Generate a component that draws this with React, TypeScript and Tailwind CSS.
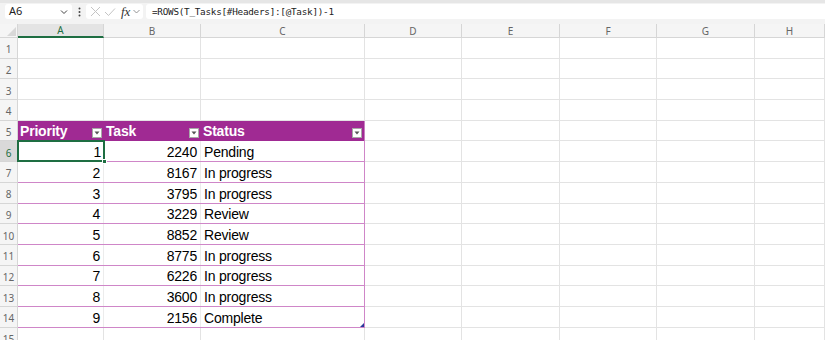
import React from "react"

const cols = [
  { key: "A", w: "w-[86px]" },
  { key: "B", w: "w-[97px]" },
  { key: "C", w: "w-[164px]" },
  { key: "D", w: "w-[97px]" },
  { key: "E", w: "w-[98px]" },
  { key: "F", w: "w-[97px]" },
  { key: "G", w: "w-[98px]" },
  { key: "H", w: "flex-1" },
]

const data: [number, number, string][] = [
  [1, 2240, "Pending"],
  [2, 8167, "In progress"],
  [3, 3795, "In progress"],
  [4, 3229, "Review"],
  [5, 8852, "Review"],
  [6, 8775, "In progress"],
  [7, 6226, "In progress"],
  [8, 3600, "In progress"],
  [9, 2156, "Complete"],
]

const cellFont = { fontFamily: '"Liberation Sans", Arial, sans-serif' }
const uiFont = { fontFamily: '"Segoe UI", "Noto Sans", "Open Sans", sans-serif' }

function FilterBtn() {
  return (
    <span className="absolute right-[2px] bottom-[3px] w-[10px] h-[10px] bg-white border border-[#a8a8a8] flex items-center justify-center">
      <svg width="6" height="4" viewBox="0 0 6 4">
        <path d="M0.5 0.5 L5.5 0.5 L3 3.5 Z" fill="#555" />
      </svg>
    </span>
  )
}

function RowHead({ n, active }: { n: number; active?: boolean }) {
  return (
    <div
      className={
        "w-[18px] shrink-0 flex items-center justify-center pt-[3px] text-[10px] leading-none border-r border-b border-[#d6d6d6] " +
        (active ? "bg-[#d9d9d9] text-[#1e6e42]" : "bg-[#f5f5f5] text-[#666]")
      }
      style={uiFont}
    >
      {n}
    </div>
  )
}

function EmptyRow({ n }: { n: number }) {
  return (
    <div className="flex h-[20.7px]">
      <RowHead n={n} />
      {cols.map((c) => (
        <div key={c.key} className={c.w + " shrink-0 border-r border-b border-[#e3e3e3]"} />
      ))}
    </div>
  )
}

export default function App() {
  return (
    <div className="w-[825px] h-[340px] overflow-hidden bg-white relative select-none">
      {/* Formula bar */}
      <div className="h-[24px] bg-[#f3f3f3] border-t-[3px] border-[#e6e6e6] flex items-start pt-[1px] pl-[5px]" style={uiFont}>
        <div className="w-[67px] h-[15px] bg-white rounded-[3px] flex items-center justify-between pl-[4px] pr-[4px] text-[11px] text-[#222]">
          <span>A6</span>
          <svg width="8" height="6" viewBox="0 0 8 6">
            <path d="M1 1.5 L4 4.5 L7 1.5" fill="none" stroke="#444" strokeWidth="1" />
          </svg>
        </div>
        <div className="w-[14px] h-[15px] flex items-center justify-center">
          <svg width="3" height="10" viewBox="0 0 3 10">
            <circle cx="1.5" cy="1.5" r="1" fill="#444" />
            <circle cx="1.5" cy="5" r="1" fill="#444" />
            <circle cx="1.5" cy="8.5" r="1" fill="#444" />
          </svg>
        </div>
        <div className="w-[57px] h-[15px] bg-white rounded-[3px] flex items-center pl-[4px] gap-[3px]">
          <svg width="11" height="11" viewBox="0 0 11 11">
            <path d="M1 1 L10 10 M10 1 L1 10" stroke="#c4c4c4" strokeWidth="1" />
          </svg>
          <svg width="12" height="10" viewBox="0 0 12 10">
            <path d="M1 5 L4.5 8.5 L11 1.5" fill="none" stroke="#c4c4c4" strokeWidth="1" />
          </svg>
          <span className="text-[13px] italic text-[#333] leading-none ml-[2px]" style={{ fontFamily: '"Liberation Serif", serif' }}>
            fx
          </span>
          <svg width="7" height="5" viewBox="0 0 7 5">
            <path d="M0.5 1 L3.5 4 L6.5 1" fill="none" stroke="#888" strokeWidth="0.9" />
          </svg>
        </div>
        <div className="flex-1 ml-[3px] h-[15px] bg-white rounded-l-[3px] flex items-center pl-[6px]">
          <span
            className="text-[9.3px] tracking-[-0.25px] text-[#222]"
            style={{ fontFamily: '"DejaVu Sans Mono", "Liberation Mono", monospace' }}
          >
            =ROWS(T_Tasks[#Headers]:[@Task])-1
          </span>
        </div>
      </div>

      {/* Column headers */}
      <div className="flex h-[14px] bg-[#f5f5f5]" style={uiFont}>
        <div className="w-[18px] shrink-0 border-r border-b border-[#d6d6d6] flex items-end justify-end pr-[1px] pb-[1px]">
          <svg width="9" height="9" viewBox="0 0 9 9">
            <path d="M9 0 L9 9 L0 9 Z" fill="#d8d8d8" />
          </svg>
        </div>
        {cols.map((c) =>
          c.key === "A" ? (
            <div
              key={c.key}
              className={c.w + " shrink-0 bg-[#e4e4e4] border-r border-[#d6d6d6] border-b-2 border-b-[#1e6e42] text-[10px] text-[#1e6e42] flex items-center justify-center leading-none"}
            >
              {c.key}
            </div>
          ) : (
            <div
              key={c.key}
              className={c.w + " shrink-0 border-r border-b border-[#d6d6d6] text-[10px] text-[#666] flex items-center justify-center leading-none"}
            >
              {c.key}
            </div>
          )
        )}
      </div>

      {/* Rows */}
      {[1, 2, 3, 4].map((n) => (
        <EmptyRow key={n} n={n} />
      ))}

      {/* Table header row 5 */}
      <div className="flex h-[20.7px]" style={cellFont}>
        <RowHead n={5} />
        <div className="w-[347px] shrink-0 flex bg-[#a02a93] text-white font-bold text-[14px] leading-[16px] tracking-[-0.2px] border-r border-[#c77fc0]">
          <div className="w-[86px] relative flex items-end pb-[2px] pl-[2px]">
            Priority
            <FilterBtn />
          </div>
          <div className="w-[97px] relative flex items-end pb-[2px] pl-[2px]">
            Task
            <FilterBtn />
          </div>
          <div className="flex-1 relative flex items-end pb-[2px] pl-[2px]">
            Status
            <FilterBtn />
          </div>
        </div>
        {cols.slice(3).map((c) => (
          <div key={c.key} className={c.w + " shrink-0 border-r border-b border-[#e3e3e3]"} />
        ))}
      </div>

      {data.map(([p, t, s], i) => (
        <div key={i} className="flex h-[20.7px]" style={cellFont}>
          <RowHead n={i + 6} active={i === 0} />
          <div className="w-[347px] shrink-0 flex text-[14px] leading-[16px] tracking-[-0.2px] text-black border-r border-b border-[#cf86c8]">
            <div
              className={
                "w-[86px] shrink-0 flex items-end pb-[1px] justify-end pr-[3px] relative " +
                (i === 0 ? "outline-2 outline-[#1e6e42] -outline-offset-1 z-10" : "border-r border-[#ececec]")
              }
            >
              {p}
              {i === 0 && <span className="absolute right-[-3px] bottom-[-3px] w-[5px] h-[5px] bg-[#1e6e42] border border-white" />}
            </div>
            <div className="w-[97px] shrink-0 flex items-end pb-[1px] justify-end pr-[3px] border-r border-[#ececec]">{t}</div>
            <div className="flex-1 flex items-end pb-[1px] pl-[3px] relative">
              {s}
              {i === data.length - 1 && (
                <svg className="absolute right-0 bottom-0" width="4" height="4" viewBox="0 0 4 4">
                  <path d="M4 0 L4 4 L0 4 Z" fill="#2a3a9a" />
                </svg>
              )}
            </div>
          </div>
          {cols.slice(3).map((c) => (
            <div key={c.key} className={c.w + " shrink-0 border-r border-b border-[#e3e3e3]"} />
          ))}
        </div>
      ))}

      <EmptyRow n={15} />
    </div>
  )
}
